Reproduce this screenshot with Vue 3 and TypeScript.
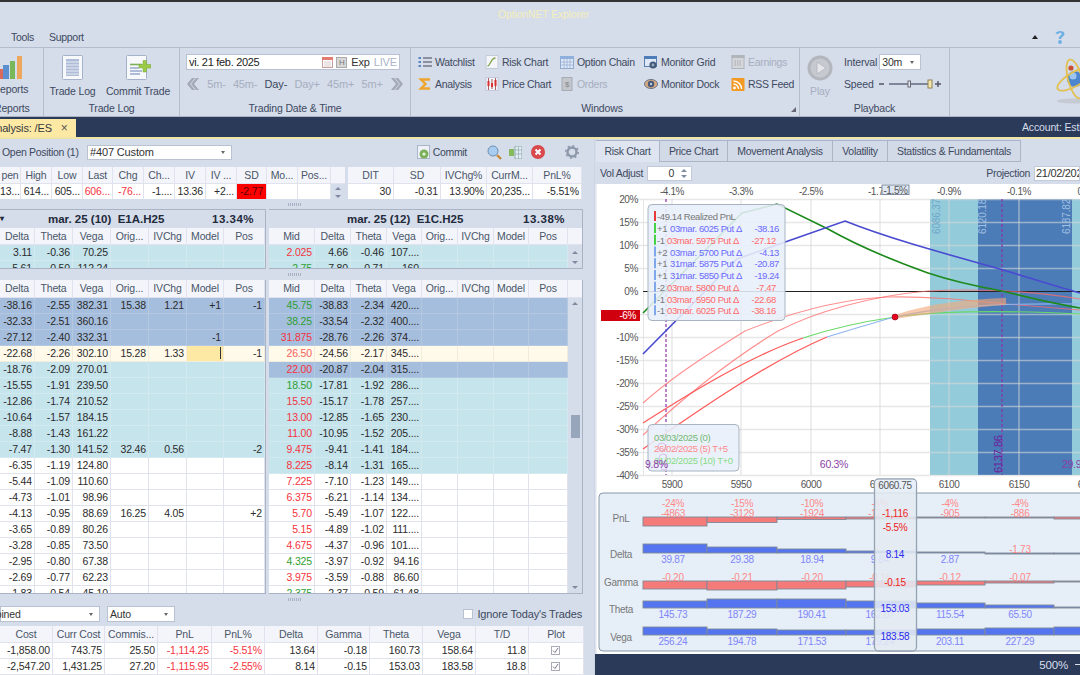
<script setup lang="ts">
type Row = string[];
const stripHead = ['pen','High','Low','Last','Chg','Ch...','IV','IV ...','SD','Mo...','Pos...'];
const stripRow = ['13...','614...','605...','606...','-76...','-1....','13.36','+2...','-2.77','',''];
const strip2Head = ['DIT','SD','IVChg%','CurrM...','PnL%'];
const strip2Row = ['30','-0.31','13.90%','20,235...','-5.51%'];
const headL = ['Delta','Theta','Vega','Orig...','IVChg','Model','Pos'];
const headR = ['Mid','Delta','Theta','Vega','Orig...','IVChg','Model','Pos'];

const midL: Row[] = [
  ['cyan','3.11','-0.36','70.25','','','',''],
  ['cyan','5.61','-0.50','112.24','','','',''],
];
const midR: Row[] = [
  ['cyan','r','2.025','4.66','-0.46','107....','','','',''],
  ['cyan','g','2.75','7.80','-0.71','160','','','',''],
];
const mainL: Row[] = [
  ['blue','-38.16','-2.55','382.31','15.38','1.21','+1','-1'],
  ['blue','-32.33','-2.51','360.16','','','',''],
  ['blue','-27.12','-2.40','332.31','','','-1',''],
  ['cream','-22.68','-2.26','302.10','15.28','1.33','#','-1'],
  ['cyan','-18.76','-2.09','270.01','','','',''],
  ['cyan','-15.55','-1.91','239.50','','','',''],
  ['cyan','-12.86','-1.74','210.52','','','',''],
  ['cyan','-10.64','-1.57','184.15','','','',''],
  ['cyan','-8.88','-1.43','161.22','','','',''],
  ['cyan','-7.47','-1.30','141.52','32.46','0.56','','-2'],
  ['white','-6.35','-1.19','124.80','','','',''],
  ['white','-5.44','-1.09','110.60','','','',''],
  ['white','-4.73','-1.01','98.96','','','',''],
  ['white','-4.13','-0.95','88.69','16.25','4.05','','+2'],
  ['white','-3.65','-0.89','80.26','','','',''],
  ['white','-3.28','-0.85','73.50','','','',''],
  ['white','-2.95','-0.80','67.38','','','',''],
  ['white','-2.69','-0.77','62.23','','','',''],
  ['white','-1.83','-0.54','45.10','','','',''],
];
const mainR: Row[] = [
  ['blue','g','45.75','-38.83','-2.34','420....'],
  ['blue','g','38.25','-33.54','-2.32','400....'],
  ['blue','r','31.875','-28.76','-2.26','374....'],
  ['cream','l','26.50','-24.56','-2.17','345....'],
  ['blue','r','22.00','-20.87','-2.04','315....'],
  ['cyan','g','18.50','-17.81','-1.92','286....'],
  ['cyan','r','15.50','-15.17','-1.78','257....'],
  ['cyan','r','13.00','-12.85','-1.65','230....'],
  ['cyan','r','11.00','-10.95','-1.52','205....'],
  ['cyan','r','9.475','-9.41','-1.41','184....'],
  ['cyan','r','8.225','-8.14','-1.31','165....'],
  ['white','r','7.225','-7.10','-1.23','149....'],
  ['white','r','6.375','-6.21','-1.14','134....'],
  ['white','r','5.70','-5.49','-1.07','122....'],
  ['white','r','5.15','-4.89','-1.02','111....'],
  ['white','r','4.675','-4.37','-0.96','101....'],
  ['white','g','4.325','-3.97','-0.92','94.16'],
  ['white','r','3.975','-3.59','-0.88','86.60'],
  ['white','g','2.375','-2.37','-0.59','61.48'],
];
const botHead = ['Cost','Curr Cost','Commis...','PnL','PnL%','Delta','Gamma','Theta','Vega','T/D','Plot'];
const botRows: Row[] = [
  ['-1,858.00','743.75','25.50','-1,114.25','-5.51%','13.64','-0.18','160.73','158.64','11.8',''],
  ['-2,547.20','1,431.25','27.20','-1,115.95','-2.55%','8.14','-0.15','153.03','183.58','18.8',''],
];
const navItems = [['5m-',0],['45m-',0],['Day-',1],['Day+',0],['45m+',0],['5m+',0]] as [string, number][];
const rightTabs = ['Price Chart','Movement Analysis','Volatility','Statistics & Fundamentals'];

const yLabels = [20,15,10,5,0,-5,-10,-15,-20,-25,-30,-35,-40];
const yPos = (p: number) => 290 - p * 4.6;
const xGrid = [672,741,811,880,949,1019,1088];
const xText = ['5900','5950','6000','6050','6100','6150','6200'];
const topPct = [[672,'-4.1%'],[741,'-3.3%'],[811,'-2.5%'],[880,'-1.7%'],[949,'-0.9%'],[1019,'-0.1%'],[1088,'0.7%']] as [number,string][];
const tipRows = [
  ['#45d045','+1','03mar. 6025 Put Δ','-38.16','b'],
  ['#45d045','-1','03mar. 5975 Put Δ','-27.12','r'],
  ['#7fa8ea','+2','03mar. 5700 Put Δ','-4.13','b'],
  ['#7fa8ea','+1','31mar. 5875 Put Δ','-20.87','b'],
  ['#7fa8ea','+1','31mar. 5850 Put Δ','-19.24','b'],
  ['#7fa8ea','-2','03mar. 5800 Put Δ','-7.47','r'],
  ['#7fa8ea','-1','03mar. 5950 Put Δ','-22.68','r'],
  ['#7fa8ea','-1','03mar. 6025 Put Δ','-38.16','r'],
];
const edges = [643,707,777,846,916,985,1054,1124];
function bars(base: number, tops: number[]) {
  return tops.map((t, i) => ({ x: edges[i], w: edges[i + 1] - edges[i], y: Math.min(base, t), h: Math.abs(t - base) }));
}
const rowsPanel = [
  { name:'PnL', ly:517, fill:'#f57a7a', bars: bars(516,[525,521.5,518.5,518,517,517,518]) },
  { name:'Delta', ly:553, fill:'#5575f0', bars: bars(552,[543,546,548,550,551,553,553]) },
  { name:'Gamma', ly:581, fill:'#f57a7a', bars: bars(580,[588,589,588,586,584,582,581]) },
  { name:'Theta', ly:608, fill:'#5575f0', bars: bars(607,[600,598,598,600,602,604,606]) },
  { name:'Vega', ly:636, fill:'#5575f0', bars: bars(634,[626,628,629,629,628,627,626]) },
];
const panelRed = [
  [673,505.5,'-24%'],[742,505.5,'-15%'],[812,505.5,'-10%'],[880,505.5,'-6%'],[950,505.5,'-4%'],[1020,505.5,'-4%'],
  [673,515.5,'-4863'],[742,515.5,'-3129'],[812,515.5,'-1924'],[880,515.5,'-1247'],[950,515.5,'-905'],[1020,515.5,'-886'],
  [1020,552,'-1.73'],
  [673,580,'-0.20'],[742,580,'-0.21'],[812,580,'-0.20'],[880,580,'-0.16'],[950,580,'-0.12'],[1020,580,'-0.07'],
] as [number,number,string][];
const panelBlue = [
  [673,562,'39.87'],[742,562,'29.38'],[812,562,'18.94'],[880,562,'9.84'],[950,562,'2.87'],
  [673,617,'145.73'],[742,617,'187.29'],[812,617,'190.41'],[880,617,'162.07'],[950,617,'115.54'],[1020,617,'65.50'],
  [673,644,'256.24'],[742,644,'194.78'],[812,644,'171.53'],[880,644,'179.24'],[950,644,'203.11'],[1020,644,'227.29'],
] as [number,number,string][];
</script>

<template>
  <div class="app">
    <div class="topline"></div>
    <div class="titlebar">OptionNET Explorer</div>
    <div class="menubar">
      <span class="menu">Tools</span>
      <span class="menu">Support</span>
      <span class="menu-spacer"></span>
      <svg class="collapse" width="6" height="4" viewBox="0 0 6 4"><path d="M0 4L3 0L6 4Z" fill="#222"/></svg>
      <svg class="help" width="12" height="16" viewBox="0 0 12 16">
        <path d="M1.5 4.5C2 1.5 10.5 .5 10.5 4.8C10.5 7.5 7.3 7.5 7.3 10H4.7C4.7 6.8 7.5 6.8 7.5 4.8C7.5 3.2 4.5 3.2 4.2 5.2Z" fill="#6fb0e3"/>
        <circle cx="6" cy="13" r="1.9" fill="#6fb0e3"/>
      </svg>
    </div>

    <div class="ribbon">
      <div class="group g-reports">
        <div class="g-body reports-body">
          <svg width="24" height="24" viewBox="0 0 24 24">
            <rect x="-2" y="14" width="5" height="10" fill="#dc6a5c"/>
            <rect x="3" y="10" width="6" height="14" fill="#5c8fd0"/>
            <rect x="10" y="6" width="5" height="18" fill="#79b85a"/>
            <rect x="17" y="1" width="5" height="23" fill="#eda75c"/>
          </svg>
          <span class="clip-label">eports</span>
        </div>
        <div class="g-label g-label-clip">Reports</div>
      </div>

      <div class="group g-log">
        <div class="g-body log-body">
          <div class="bigbtn b1">
            <svg width="21" height="25" viewBox="0 0 21 25">
              <rect x=".5" y=".5" width="20" height="24" rx="1" fill="#f6f8fc" stroke="#a3b2c9"/>
              <rect x="4" y="4" width="13" height="17" fill="#aebcd8"/>
              <path d="M4 7h13M4 10h13M4 13h13M4 16h13M4 19h13" stroke="#e8edf6"/>
            </svg>
            <span>Trade Log</span>
          </div>
          <div class="bigbtn b2">
            <svg width="25" height="25" viewBox="0 0 25 25">
              <rect x=".5" y=".5" width="20" height="24" rx="1" fill="#f6f8fc" stroke="#a3b2c9"/>
              <path d="M4 9.5h12" stroke="#7cb05a" stroke-width="1.6"/>
              <path d="M4 13h9M4 16h12M4 19h10" stroke="#aebcd8" stroke-width="2"/>
              <path d="M17 5.5h3.5V9.5H25V13H20.5V17H17V13H13V9.5H17Z" fill="#9acb46" stroke="#7ba437" stroke-width=".5"/>
            </svg>
            <span>Commit Trade</span>
          </div>
        </div>
        <div class="g-label">Trade Log</div>
      </div>

      <div class="group g-date">
        <div class="g-body date-body">
          <div class="dateinput">
            <span class="date-text">vi. 21 feb. 2025</span>
            <svg width="11" height="11" viewBox="0 0 11 11">
              <rect x=".5" y=".5" width="10" height="10" fill="#fff" stroke="#c8a0a0"/>
              <rect x="0" y="0" width="11" height="3" fill="#e27b70"/>
              <path d="M2 5h7M2 7h7M2 9h7" stroke="#dcc" />
            </svg>
            <span class="hbox">H</span>
            <span class="exp">Exp</span>
            <span class="live">LIVE</span>
          </div>
          <div class="navrow">
            <svg width="14" height="12" viewBox="0 0 14 12"><path d="M6 0L1 6L6 12H9L4 6L9 0ZM10 0L5 6L10 12H13L8 6L13 0Z" fill="#a3a9b5"/></svg>
            <span v-for="n in navItems" :key="n[0]" :class="n[1] ? 'nav-on' : 'nav-off'">{{ n[0] }}</span>
            <svg width="14" height="12" viewBox="0 0 14 12"><path d="M1 0L6 6L1 12H4L9 6L4 0ZM5 0L10 6L5 12H8L13 6L8 0Z" fill="#a3a9b5"/></svg>
          </div>
        </div>
        <div class="g-label">Trading Date &amp; Time</div>
      </div>

      <div class="group g-win">
        <div class="g-body wingrid">
          <span class="wi">
            <svg width="14" height="12" viewBox="0 0 14 12"><path d="M5 2h9M5 6h9M5 10h9" stroke="#445" stroke-width="1.2"/><path d="M.5 1h2.5v2h-2.5zM.5 5h2.5v2h-2.5zM.5 9h2.5v2h-2.5z" fill="#5a86c0"/></svg>
            Watchlist
          </span>
          <span class="wi">
            <svg width="13" height="14" viewBox="0 0 13 14"><rect x=".5" y=".5" width="12" height="13" fill="#f3f5fa" stroke="#c3cad8"/><path d="M2 11C5 11 5 3 10 3" fill="none" stroke="#7fa64a" stroke-width="1.3"/></svg>
            Risk Chart
          </span>
          <span class="wi">
            <svg width="14" height="13" viewBox="0 0 14 13"><rect x=".5" y=".5" width="13" height="12" fill="#dfe8f6" stroke="#8fa9cf"/><rect x="0" y="0" width="14" height="3" fill="#8fb0dc"/><path d="M1 6h12M1 9h12M4 3v9M7 3v9M10 3v9" stroke="#8fa9cf" stroke-width=".7"/></svg>
            Option Chain
          </span>
          <span class="wi">
            <svg width="14" height="13" viewBox="0 0 14 13"><rect x=".5" y=".5" width="12" height="10" fill="#dfe8f6" stroke="#5c7fae"/><rect x="0" y="0" width="13" height="3" fill="#4f7db8"/><circle cx="9" cy="9" r="3.6" fill="#445a7a"/><circle cx="9" cy="9" r="1.4" fill="#9ab"/></svg>
            Monitor Grid
          </span>
          <span class="wi off">
            <svg width="13" height="14" viewBox="0 0 13 14"><rect x=".5" y=".5" width="12" height="13" fill="#d4d6da" stroke="#b0b4bb"/><rect x="0" y="0" width="13" height="3" fill="#b0b4bb"/><path d="M3 6h7M3 8h7M3 10h7" stroke="#a5a9b0" stroke-dasharray="1.5 1"/></svg>
            Earnings
          </span>
          <span class="wi">
            <svg width="13" height="14" viewBox="0 0 13 14"><path d="M11.5 2.5H2.5L7 7L2.5 11.5H11.5" fill="none" stroke="#eea52e" stroke-width="2.4"/></svg>
            Analysis
          </span>
          <span class="wi">
            <svg width="13" height="14" viewBox="0 0 13 14"><rect x=".5" y=".5" width="12" height="13" fill="#f3f5fa" stroke="#c3cad8"/><path d="M3 1v12M6.5 2v10M10 1v12" stroke="#8a2020" stroke-width=".7"/><rect x="2" y="4" width="2" height="5" fill="#d93030"/><rect x="5.5" y="6" width="2" height="4" fill="#d93030"/><rect x="9" y="3" width="2" height="6" fill="#d93030"/></svg>
            Price Chart
          </span>
          <span class="wi off">
            <svg width="13" height="14" viewBox="0 0 13 14"><rect x="1.5" y=".5" width="10" height="13" fill="#c3c6cc" stroke="#a8acb4"/><text x="6.5" y="10" class="dollar">$</text></svg>
            Orders
          </span>
          <span class="wi">
            <svg width="14" height="12" viewBox="0 0 14 12"><ellipse cx="7" cy="6" rx="6.5" ry="4.5" fill="#d8a97e" stroke="#66758c"/><circle cx="7" cy="6" r="3.2" fill="#47597a"/><circle cx="7" cy="6" r="1.2" fill="#bcd"/></svg>
            Monitor Dock
          </span>
          <span class="wi">
            <svg width="13" height="13" viewBox="0 0 13 13"><rect width="13" height="13" rx="1" fill="#f39a24"/><circle cx="3" cy="10" r="1.4" fill="#fff"/><path d="M2 6a5 5 0 015 5M2 3a8 8 0 018 8" fill="none" stroke="#fff" stroke-width="1.4"/></svg>
            RSS Feed
          </span>
        </div>
        <div class="g-label g-label-win">Windows
          <svg class="launcher" width="5" height="5" viewBox="0 0 5 5"><path d="M5 0V5H0Z" fill="#667"/></svg>
        </div>
      </div>

      <div class="group g-play">
        <div class="g-body play-body">
          <div class="playcol">
            <svg width="26" height="26" viewBox="0 0 26 26">
              <circle cx="13" cy="13" r="12.5" fill="#b3b6bd"/>
              <circle cx="13" cy="13" r="9.5" fill="#c6c9cf"/>
              <path d="M10 7L19 13L10 19Z" fill="#e4e6ea" stroke="#a5a8af" stroke-width=".6"/>
            </svg>
            <span class="off">Play</span>
          </div>
          <div class="playctl">
            <div class="pc-row">
              <span>Interval</span>
              <span class="sel sel-int"><span>30m</span><i class="caret"></i></span>
            </div>
            <div class="pc-row speed">
              <span>Speed</span>
              <svg width="66" height="12" viewBox="0 0 66 12">
                <path d="M3 6h5M62 3v6M59 6h6" stroke="#556" stroke-width="1.4"/>
                <path d="M13 6h41" stroke="#7d8797" stroke-width="2"/>
                <rect x="32" y="3" width="2.5" height="6" fill="#e8eaef" stroke="#667"/>
                <rect x="52" y="2" width="4" height="8" fill="#f5e7ad" stroke="#8f8350"/>
              </svg>
            </div>
          </div>
        </div>
        <div class="g-label">Playback</div>
      </div>

      <div class="logo">
        <svg width="40" height="60" viewBox="0 0 40 60">
          <ellipse cx="23" cy="50" rx="16" ry="2.5" fill="#c6cad3"/>
          <circle cx="25" cy="28" r="8" fill="#4b86cf"/>
          <circle cx="23" cy="25" r="3.5" fill="#9cc6ef"/>
          <ellipse cx="25" cy="28" rx="7" ry="20" transform="rotate(-15 25 28)" fill="none" stroke="#e3c04f" stroke-width="1.8"/>
          <ellipse cx="25" cy="28" rx="7" ry="20" transform="rotate(60 25 28)" fill="none" stroke="#e3c04f" stroke-width="1.8"/>
          <circle cx="21" cy="17" r="2.6" fill="#c8502e"/>
        </svg>
      </div>
    </div>

    <div class="tabbar">
      <div class="doctab"><span class="doctab-text">Analysis: /ES</span><span class="doctab-x">×</span></div>
      <span class="account">Account: Estimate</span>
    </div>
    <div class="accent"></div>

    <div class="main">
      <div class="left">
        <div class="posbar">
          <span class="pos-title">Open Position (1)</span>
          <span class="sel sel-pos"><span>#407 Custom</span><i class="caret"></i></span>
          <span class="pos-spacer"></span>
          <svg width="14" height="14" viewBox="0 0 14 14"><rect x=".5" y=".5" width="12" height="13" fill="#eef1f7" stroke="#a9b5c9"/><circle cx="7" cy="9" r="4.5" fill="#7cb05a"/><circle cx="7" cy="9" r="1.6" fill="#e9f3dd"/></svg>
          <span class="commit">Commit</span>
          <svg class="ic1" width="15" height="15" viewBox="0 0 15 15"><circle cx="6" cy="6" r="5" fill="#a9cdf0" stroke="#6d8fb3"/><path d="M10 10l4 4" stroke="#c8893c" stroke-width="2.4"/></svg>
          <svg class="ic2" width="13" height="13" viewBox="0 0 13 13"><rect x="0" y="3" width="5" height="7" fill="#85bb5c"/><rect x="6" y="0" width="7" height="13" fill="#e6ecf4" stroke="#8aa"/><path d="M9.5 0v13M6 4h7M6 8h7" stroke="#8aa" stroke-width=".7"/></svg>
          <svg class="ic3" width="14" height="14" viewBox="0 0 14 14"><circle cx="7" cy="7" r="7" fill="#d9484a"/><path d="M4.5 4.5l5 5M9.5 4.5l-5 5" stroke="#fff" stroke-width="2"/></svg>
          <svg class="ic4" width="14" height="14" viewBox="0 0 14 14"><circle cx="7" cy="7" r="4.5" fill="none" stroke="#8d98aa" stroke-width="2.4"/><circle cx="7" cy="7" r="6.2" fill="none" stroke="#8d98aa" stroke-width="1.6" stroke-dasharray="2 2.8"/></svg>
        </div>

        <div class="strips">
          <div class="tbl strip-a">
            <div class="row head cols-strip">
              <span v-for="h in stripHead" :key="h" class="c ch">{{ h }}</span>
              <span class="c ch blank"></span>
            </div>
            <div class="row white cols-strip">
              <span v-for="(v, i) in stripRow" :key="i" class="c" :class="{ red: i === 3 || i === 4, sdbad: i === 8 }">{{ v }}</span>
              <span class="mini-sb"><i class="arrow up"></i><i class="arrow down"></i></span>
            </div>
          </div>
          <div class="tbl strip-b">
            <div class="row head cols-strip2">
              <span v-for="h in strip2Head" :key="h" class="c ch">{{ h }}</span>
            </div>
            <div class="row white cols-strip2">
              <span v-for="(v, i) in strip2Row" :key="i" class="c">{{ v }}</span>
            </div>
          </div>
        </div>

        <div class="splitter"><i class="grip"></i></div>

        <div class="pair pair-mid">
          <div class="tbl tbl-l">
            <div class="exphead">
              <span class="ex-tri">▾</span>
              <span class="ex-name ex-name-l">mar. 25 (10)&nbsp; E1A.H25</span>
              <span class="ex-pct">13.34%</span>
            </div>
            <div class="row head cols-l"><span v-for="h in headL" :key="h" class="c ch">{{ h }}</span></div>
            <div class="clip clip-mid">
              <div v-for="(r, i) in midL" :key="i" class="row cols-l" :class="r[0]">
                <span v-for="(v, j) in r.slice(1)" :key="j" class="c">{{ v }}</span>
              </div>
            </div>
          </div>
          <div class="tbl tbl-r">
            <div class="exphead">
              <span class="ex-name ex-name-r">mar. 25 (12)&nbsp; E1C.H25</span>
              <span class="ex-pct">13.38%</span>
            </div>
            <div class="row head cols-r">
              <span v-for="h in headR" :key="h" class="c ch">{{ h }}</span><span class="c ch blank"></span>
            </div>
            <div class="withsb">
              <div class="clip clip-mid rows-col">
                <div v-for="(r, i) in midR" :key="i" class="row cols-rb" :class="r[0]">
                  <span class="c" :class="r[1] === 'r' ? 'red' : 'green'">{{ r[2] }}</span>
                  <span v-for="(v, j) in r.slice(3)" :key="j" class="c">{{ v }}</span>
                </div>
              </div>
              <div class="sb sb-mid"><i class="arrow up"></i><i class="arrow down"></i></div>
            </div>
          </div>
        </div>

        <div class="splitter split2"><i class="grip"></i></div>

        <div class="pair pair-main">
          <div class="tbl tbl-l">
            <div class="row head cols-l"><span v-for="h in headL" :key="h" class="c ch">{{ h }}</span></div>
            <div class="clip clip-main">
              <div v-for="(r, i) in mainL" :key="i" class="row cols-l" :class="r[0]">
                <template v-for="(v, j) in r.slice(1)" :key="j">
                  <span v-if="v === '#'" class="c editcell"><i class="cursor"></i></span>
                  <span v-else class="c">{{ v }}</span>
                </template>
              </div>
            </div>
          </div>
          <div class="tbl tbl-r">
            <div class="row head cols-r">
              <span v-for="h in headR" :key="h" class="c ch">{{ h }}</span><span class="c ch blank"></span>
            </div>
            <div class="withsb">
              <div class="clip clip-main rows-col">
                <div v-for="(r, i) in mainR" :key="i" class="row cols-rb" :class="r[0]">
                  <span class="c" :class="r[1] === 'r' ? 'red' : r[1] === 'g' ? 'green' : 'lred'">{{ r[2] }}</span>
                  <span class="c">{{ r[3] }}</span>
                  <span class="c">{{ r[4] }}</span>
                  <span class="c">{{ r[5] }}</span>
                  <span class="c"></span><span class="c"></span><span class="c"></span><span class="c"></span>
                </div>
              </div>
              <div class="sb sb-main"><i class="arrow up"></i><i class="thumb"></i><i class="arrow down"></i></div>
            </div>
          </div>
        </div>

        <div class="splitter split3"><i class="grip"></i></div>

        <div class="controls">
          <span class="sel sel-a"><span class="sel-a-text">Combined</span><i class="caret"></i></span>
          <span class="sel sel-b"><span>Auto</span><i class="caret"></i></span>
          <span class="pos-spacer"></span>
          <i class="chk"></i>
          <span class="ignore">Ignore Today's Trades</span>
        </div>

        <div class="tbl bottom">
          <div class="row head cols-bot"><span v-for="h in botHead" :key="h" class="c ch">{{ h }}</span></div>
          <div v-for="(r, i) in botRows" :key="i" class="row white cols-bot">
            <template v-for="(v, j) in r" :key="j">
              <span v-if="j === 10" class="c plotcell">
                <svg width="9" height="9" viewBox="0 0 9 9"><rect x=".5" y=".5" width="8" height="8" fill="#fff" stroke="#aab"/><path d="M2 4.5L4 6.5L7 2" fill="none" stroke="#778" stroke-width="1"/></svg>
              </span>
              <span v-else class="c" :class="{ red: j === 3 || j === 4 }">{{ v }}</span>
            </template>
          </div>
        </div>
      </div>

      <div class="right">
        <div class="rtabs">
          <span class="rtab active">Risk Chart</span>
          <span v-for="t in rightTabs" :key="t" class="rtab">{{ t }}</span>
        </div>
        <div class="rtool">
          <span class="lbl">Vol Adjust</span>
          <span class="spin"><span class="spin-v">0</span><span class="spin-a"><i class="arrow up"></i><i class="arrow down"></i></span></span>
          <span class="pos-spacer"></span>
          <span class="lbl">Projection</span>
          <span class="projinput">21/02/2025</span>
        </div>
        <svg class="chart" width="485" height="470" viewBox="595 183 485 470">
          <rect x="595" y="183" width="485" height="470" fill="#fff"/>
          <rect x="595" y="183" width="1.5" height="470" fill="#dfe4ef"/>
          <rect x="930" y="198" width="48" height="276" fill="#93cbdb"/>
          <rect x="978" y="198" width="94" height="276" fill="#4c7cb8"/>
          <rect x="1072" y="198" width="10" height="276" fill="#93cbdb"/>
          <path v-for="x in xGrid" :key="x" :d="`M${x} 198V474`" stroke="rgba(215,215,215,.65)" stroke-width="1.3"/>
          <path d="M643.5 198V474" stroke="rgba(215,215,215,.6)"/>
          <path v-for="p in yLabels" :key="p" :d="`M${p === 0 ? 643 : 637} ${yPos(p) + 0.5}H1080`" :stroke="p === 0 ? '#222' : 'rgba(215,215,215,.6)'" :stroke-width="p === 0 ? 1 : 1.3"/>
          <path d="M666 198V474M1002 198V474" stroke="#8d33a8" stroke-width="1.2" stroke-dasharray="3 2"/>
          <text x="937" y="233" class="t-band" transform="rotate(-90 937 233)" fill="#6ea7c8" dy="3">6086.37</text>
          <text x="983" y="233" class="t-band" transform="rotate(-90 983 233)" fill="#9fc0e2" dy="3">6120.18</text>
          <text x="1067" y="233" class="t-band" transform="rotate(-90 1067 233)" fill="#9fc0e2" dy="3">6187.82</text>
          <text x="998" y="472" class="t-purple t-dark" transform="rotate(-90 998 472)" dy="4">6137.86</text>
          <text x="834" y="467" class="t-purple" text-anchor="middle">60.3%</text>
          <text x="1062" y="467" class="t-purple">29.9%</text>

          <!-- curves -->
          <path d="M643 402C670 378 700 358 745 330C790 312 840 298 888 296C925 295 965 299 1006 303L1080 309" fill="none" stroke="#ff6a6a" stroke-opacity=".75" stroke-width="1.1"/>
          <path d="M643 434C680 400 725 362 778 330C815 311 870 295 928 290C960 288 1020 288 1080 298" fill="none" stroke="#ff6a6a" stroke-opacity=".75" stroke-width="1.1"/>
          <path d="M643 422C690 392 750 355 803 337" fill="none" stroke="#ff5a5a" stroke-width="1.3"/>
          <path d="M803 337C830 328 860 321 895 316" fill="none" stroke="#6ad86a" stroke-width="1.2"/>
          <path d="M895 316C940 310 1000 309 1080 313" fill="none" stroke="#6ad86a" stroke-width="1.1"/>
          <path d="M643 448C700 408 770 360 827 336" fill="none" stroke="#ff5a5a" stroke-width="1.3"/>
          <path d="M827 336C850 329 872 322 895 316C940 306 990 302 1080 303" fill="none" stroke="#8fb4f0" stroke-width="1.1"/>
          <path d="M895 314C930 302 970 298 1006 297L1006 304C960 307 930 313 895 318Z" fill="#f2a97a" fill-opacity=".62"/>
          <path d="M643 312L742 212L777 203L828 228C860 246 900 262 928 272C955 281 980 286 1002 290C1030 297 1055 303 1080 307" fill="none" stroke="#1d8a1d" stroke-width="1.6"/>
          <path d="M643 353L737 258L845 220C890 238 950 254 1000 268C1030 277 1055 285 1080 292" fill="none" stroke="#4a4ad0" stroke-width="1.6"/>
          <circle cx="895" cy="316" r="3" fill="#e8001c" stroke="#7a0010" stroke-width=".6"/>

          <!-- y labels -->
          <text v-for="p in yLabels" :key="'y'+p" x="638" :y="yPos(p) + 3.5" class="t-axis" text-anchor="end">{{ p }}%</text>
          <rect x="601" y="309" width="39" height="11" fill="#d0000e"/>
          <text x="636" y="318" class="t-axis t-white" text-anchor="end">-6%</text>
          <text v-for="t in topPct" :key="t[1]" :x="t[0]" y="194" class="t-axis" text-anchor="middle">{{ t[1] }}</text>
          <rect x="882" y="184" width="27" height="9.5" fill="#dfe7f2" stroke="#7d8ca0"/>
          <text x="895.5" y="192.5" class="t-axis" text-anchor="middle">-1.5%</text>
          <text v-for="(x, i) in xGrid" :key="'x'+x" :x="x" y="487" class="t-axis" text-anchor="middle">{{ xText[i] }}</text>

          <!-- tooltip -->
          <rect x="648" y="203.5" width="137" height="116" rx="4" fill="#e8eff9" fill-opacity=".88" stroke="#a8b4c2"/>
          <rect x="654" y="210" width="2" height="10" fill="#e83a3a"/>
          <text x="657" y="219" class="t-tip" fill="#777">-49.14 Realized PnL</text>
          <g v-for="(t, i) in tipRows" :key="i">
            <rect x="654" :y="222 + i * 11.75" width="2" height="10" :fill="t[0]"/>
            <text x="657" :y="231 + i * 11.75" class="t-tip" fill="#777">{{ t[1] }}</text>
            <text :x="t[4] === 'b' ? 670 : 667" :y="231 + i * 11.75" class="t-tip" :fill="t[4] === 'b' ? '#6a6aff' : '#ff6a6a'">{{ t[2] }}</text>
            <text :x="t[4] === 'b' ? 779 : 776" :y="231 + i * 11.75" class="t-tip" text-anchor="end" :fill="t[4] === 'b' ? '#6a6aff' : '#ff6a6a'">{{ t[3] }}</text>
          </g>
          <rect x="648" y="423.5" width="91" height="46.5" rx="4" fill="#e8eff9" fill-opacity=".88" stroke="#a8b4c2"/>
          <circle cx="662" cy="446" r="4" fill="none" stroke="#c9a3e0" stroke-opacity=".6"/>
          <circle cx="663" cy="457" r="4" fill="none" stroke="#c9a3e0" stroke-opacity=".6"/>
          <circle cx="664" cy="466" r="3" fill="none" stroke="#c9a3e0" stroke-opacity=".6"/>
          <text x="654" y="439.5" class="t-tip" fill="#72b872">03/03/2025 (0)</text>
          <text x="654" y="451" class="t-tip" fill="#ff8a8a">26/02/2025 (5) T+5</text>
          <text x="654" y="462.5" class="t-tip" fill="#86dc86">21/02/2025 (10) T+0</text>
          <text x="645" y="467" class="t-purple">9.8%</text>

          <!-- bottom panel -->
          <rect x="599" y="492" width="500" height="158" rx="4" fill="#e6eff7" stroke="#8898a8"/>
          <g v-for="r in rowsPanel" :key="r.name">
            <text x="621" :y="r.ly + 3.5" class="t-panel" text-anchor="middle">{{ r.name }}</text>
            <rect v-for="(b, i) in r.bars" :key="i" :x="b.x" :y="b.y" :width="b.w" :height="b.h" :fill="r.fill" stroke="#7f8a98" stroke-width=".9"/>
          </g>
          <text v-for="(t, i) in panelRed" :key="'r'+i" :x="t[0]" :y="t[1]" class="t-panel t-pred" text-anchor="middle">{{ t[2] }}</text>
          <text v-for="(t, i) in panelBlue" :key="'b'+i" :x="t[0]" :y="t[1]" class="t-panel t-pblue" text-anchor="middle">{{ t[2] }}</text>
          <rect x="874.5" y="478" width="42" height="172" rx="4" fill="#e4eaf3" fill-opacity=".88" stroke="#94a2b3" stroke-width="1.3"/>
          <rect x="875.2" y="478.7" width="40.6" height="11" rx="3" fill="#e8eff9"/>
          <text x="895" y="487.5" class="t-axis" text-anchor="middle">6060.75</text>
          <text x="895" y="516" class="t-ov" text-anchor="middle" fill="#ee2222">-1,116</text>
          <text x="895" y="529.5" class="t-ov" text-anchor="middle" fill="#ee2222">-5.5%</text>
          <text x="895" y="556.5" class="t-ov" text-anchor="middle" fill="#2a2aee">8.14</text>
          <text x="895" y="584.5" class="t-ov" text-anchor="middle" fill="#ee2222">-0.15</text>
          <text x="895" y="611" class="t-ov" text-anchor="middle" fill="#2a2aee">153.03</text>
          <text x="895" y="638.5" class="t-ov" text-anchor="middle" fill="#2a2aee">183.58</text>
        </svg>
        <div class="status"><span class="zoomtxt">500%</span><span class="zoomdash"></span></div>
      </div>
    </div>
  </div>
</template>

<style scoped>
.app {
  width: 1080px; height: 675px; overflow: hidden; background: #d5dcea; color: #333;
  font-family: "Liberation Sans", "Noto Sans", sans-serif; font-size: 10.5px; line-height: 14px; letter-spacing: -.15px;
  display: flex; flex-direction: column;
}
.topline { height: 2px; background: #333; flex: none; }
.titlebar { height: 25px; flex: none; text-align: center; color: #f3efbc; font-size: 10.5px; line-height: 24px; padding-left: 7px; }
.menubar { height: 20px; flex: none; display: flex; align-items: center; padding-left: 11px; border-bottom: 1px solid #b4bdce; color: #3d4a60; letter-spacing: -.3px; }
.menu { margin-right: 15px; }
.menu-spacer { flex: 1; }
.collapse { margin-right: 16px; }
.help { margin-right: 14px; }

.ribbon { height: 68px; flex: none; display: flex; border-bottom: 1px solid #aab3c4; }
.group { display: flex; flex-direction: column; border-right: 1px solid #b4bdce; flex: none; overflow: hidden; position: relative; box-sizing: border-box; }
.g-body { height: 53px; flex: none; }
.g-label { height: 14px; text-align: center; color: #3d4a60; }
.g-label-win { padding-right: 6px; }
.launcher { position: absolute; right: 3px; bottom: 4px; }
.g-reports { width: 44px; }
.reports-body { display: flex; flex-direction: column; padding-top: 7px; box-sizing: border-box; width: 30px; }
.clip-label { margin-top: 3px; white-space: nowrap; color: #3d4a60; }
.g-label-clip { margin-left: -6px; width: 48px; text-align: left; white-space: nowrap; }
.g-log { width: 136px; }
.log-body { display: flex; padding: 7px 0 0 6px; gap: 11px; box-sizing: border-box; }
.bigbtn { display: flex; flex-direction: column; align-items: center; color: #3d4a60; white-space: nowrap; gap: 4px; }
.b1 { width: 45px; } .b2 { width: 64px; }
.g-date { width: 231px; }
.date-body { padding: 6px 0 0 6px; box-sizing: border-box; }
.dateinput { width: 214px; height: 16px; box-sizing: border-box; background: #fff; border: 1px solid #b9c2d2; display: flex; align-items: center; padding: 0 2px; }
.date-text { flex: 1; color: #222; font-size: 11px; letter-spacing: -.3px; }
.hbox { width: 11px; height: 11px; box-sizing: border-box; background: #d8d8d8; border: 1px solid #aaa; color: #777; font-size: 8px; line-height: 9px; text-align: center; margin: 0 4px 0 3px; }
.exp { color: #333; margin-right: 4px; font-size: 11px; }
.live { color: #a9b5ca; font-size: 11px; }
.navrow { display: flex; align-items: center; justify-content: space-between; margin-top: 7px; width: 218px; }
.nav-on { color: #3d4a60; font-size: 11px; }
.nav-off { color: #a6afbf; font-size: 11px; }
.g-win { width: 389px; }
.wingrid { display: grid; grid-template-columns: 67px 75px 84px 87px 1fr; grid-auto-rows: 22px; padding: 3px 0 0 7px; box-sizing: border-box; }
.wi { display: flex; align-items: center; gap: 3px; white-space: nowrap; color: #3d4a60; letter-spacing: -.3px; }
.wi svg { flex: 0 0 14px; }
.wi.off, .off { color: #a6afbf; }
.dollar { font-size: 8px; text-anchor: middle; fill: #888; }
.g-play { width: 150px; }
.play-body { display: flex; padding: 7px 0 0 7px; box-sizing: border-box; }
.playcol { width: 26px; display: flex; flex-direction: column; align-items: center; gap: 3px; }
.playctl { margin-left: 11px; display: flex; flex-direction: column; margin-top: -1px; }
.pc-row { display: flex; align-items: center; height: 16px; color: #3d4a60; gap: 2px; }
.speed { margin-top: 6px; }
.sel { display: inline-flex; align-items: center; justify-content: space-between; background: #fff; border: 1px solid #b9c2d2; box-sizing: border-box; color: #333; padding: 0 6px 0 2px; height: 16px; }
.sel-int { width: 42px; }
.caret { width: 0; height: 0; border: 2.5px solid transparent; border-top: 3px solid #666; border-bottom: 0; }
.logo { flex: 1; display: flex; justify-content: flex-end; margin-right: -10px; margin-top: 3px; }
.logo svg { flex: none; }

.tabbar { height: 20px; flex: none; background: #2a3a58; display: flex; align-items: flex-end; justify-content: space-between; color: #d5dcea; overflow: hidden; }
.doctab { width: 76px; height: 18px; background: #fde9a4; display: flex; align-items: center; color: #33383f; overflow: hidden; flex: none; }
.doctab-text { margin-left: -11px; white-space: nowrap; font-size: 11px; }
.doctab-x { margin-left: 9px; color: #555; font-size: 12px; }
.account { white-space: nowrap; width: 58px; height: 20px; line-height: 20px; flex: none; overflow: hidden; }
.accent { height: 2px; background: #efe6a6; flex: none; }

.main { flex: 1; display: flex; min-height: 0; }
.left { width: 595px; flex: none; display: flex; flex-direction: column; overflow: hidden; border-right: 1px solid #cdd4e2; box-sizing: border-box; }
.posbar { height: 28px; flex: none; display: flex; align-items: center; padding: 0 15px 2px 2px; box-sizing: border-box; color: #333; }
.pos-title { width: 85px; white-space: nowrap; color: #3d4a60; letter-spacing: -.3px; }
.sel-pos { width: 145px; height: 15px; font-size: 11px; }
.pos-spacer { flex: 1; }
.commit { margin: 0 20px 0 2px; color: #3d4a60; letter-spacing: -.3px; }
.ic1 { margin-right: 7px; } .ic2 { margin-right: 9px; } .ic3 { margin-right: 20px; }

.strips { display: flex; height: 32px; flex: none; gap: 3px; }
.tbl { background: #fff; box-sizing: border-box; overflow: hidden; flex: none; }
.strip-a { width: 345px; } .strip-b { width: 234px; }
.row { display: grid; height: 16px; box-sizing: border-box; }
.head { height: 17px; background: #f3f5fb; }
.pair-main .head { height: 18px; }
.c { display: block; text-align: right; padding-right: 2px; box-sizing: border-box; white-space: nowrap; overflow: hidden; border-right: 1px solid #e0e3ee; border-bottom: 1px solid #e0e3ee; line-height: 15px; color: #2b2b2b; }
.ch { text-align: center; padding: 0; color: #4a5568; line-height: 16px; }
.blank { border-right: 0; }
.cols-strip { grid-template-columns: 21px 31px 31px 30px 31px 31px 31px 31px 30px 31px 33px 14px; }
.cols-strip2 { grid-template-columns: 46px 47px 46px 46px 49px; }
.sdbad { background: #ff0000; color: #5a0000; text-align: center; padding: 0; }
.c.red { color: #f6323e; }
.c.lred { color: #f9605e; }
.c.green { color: #2f9e33; }
.mini-sb { background: #d5dcea; display: flex; flex-direction: column; align-items: center; justify-content: space-around; }
.arrow { display: block; width: 0; height: 0; border: 3px solid transparent; }
.arrow.up { border-top: 0; border-bottom: 3px solid #7e8aa0; }
.arrow.down { border-bottom: 0; border-top: 3px solid #7e8aa0; }

.splitter { height: 10px; flex: none; display: flex; justify-content: center; align-items: center; padding-right: 4px; }
.split2 { height: 11px; }
.split3 { height: 10px; }
.grip { width: 14px; height: 3px; background: repeating-linear-gradient(90deg, #a8b2c4 0 1px, transparent 1px 2px); }

.pair { display: flex; gap: 3px; flex: none; }
.tbl-l { width: 266px; border-right: 1px solid #aab3c4; }
.tbl-r { width: 314px; border: 1px solid #aab3c4; border-width: 0 1px 0 0; }
.pair-mid .tbl { height: 60px; border-bottom: 1px solid #aab3c4; }
.pair-main { height: 314px; }
.pair-main .tbl { border-bottom: 1px solid #aab3c4; }
.exphead { height: 19px; display: flex; align-items: center; font-weight: 700; color: #1f2a3a; background: #d5dcea; border-top: 1px solid #aab3c4; box-sizing: border-box; font-size: 11.5px; letter-spacing: 0; }
.ex-tri { width: 48px; font-size: 8px; }
.ex-name { white-space: nowrap; }
.ex-name-l { width: 164px; }
.ex-name-r { margin-left: 78px; width: 176px; }
.ex-pct { white-space: nowrap; letter-spacing: .5px; }
.cols-l { grid-template-columns: 35px 38px 38px 38px 38px 37px 41px; }
.cols-r { grid-template-columns: 46px 36px 36px 35px 36px 36px 35px 39px 14px; }
.cols-rb { grid-template-columns: 46px 36px 36px 35px 36px 36px 35px 39px; }
.clip { overflow: hidden; }
.clip-mid { height: 24px; }
.clip-main { height: 295px; }
.withsb { display: flex; }
.rows-col { width: 299px; flex: none; }
.sb { flex: 1; background: #d5dcea; display: flex; flex-direction: column; align-items: center; }
.sb-mid { justify-content: space-around; height: 24px; padding: 2px 0; box-sizing: border-box; }
.sb-main { height: 295px; padding: 4px 0; box-sizing: border-box; }
.sb-main .arrow.up { margin-bottom: 110px; }
.sb-main .arrow.down { margin-top: auto; }
.thumb { display: block; width: 9px; height: 23px; background: #98a6bc; }
.blue { background: #a6bedd; } .cyan { background: #c5e4ec; } .cream { background: #fffaea; } .white { background: #fff; }
.blue .c { border-color: #b4c8e2; } .cyan .c { border-color: #d2e9f0; } .cream .c { border-color: #f2ecdc; }
.editcell { background: #fde9a4; position: relative; }
.cursor { position: absolute; right: 2px; top: 1px; width: 1px; height: 12px; background: #333; }
.controls { height: 22px; flex: none; display: flex; align-items: center; padding: 2px 12px 4px 0; box-sizing: border-box; gap: 7px; color: #3d4a60; }
.sel-a { width: 100px; }
.sel-a-text { margin-left: -29px; }
.sel-b { width: 68px; }
.chk { width: 8px; height: 8px; background: #fff; border: 1px solid #b9c2d2; margin-right: -3px; }
.ignore { white-space: nowrap; font-size: 11px; }
.bottom { width: 584px; height: 49px; }
.cols-bot { grid-template-columns: 53px 52px 53px 54px 53px 53px 52px 53px 53px 53px 55px; }
.plotcell { display: flex; align-items: center; justify-content: center; }

.right { flex: 1; display: flex; flex-direction: column; min-width: 0; overflow: hidden; }
.rtabs { height: 23px; flex: none; display: grid; grid-template-columns: 64px 68px 105px 55px 133px; align-items: end; justify-content: start; padding-left: 1px; letter-spacing: -.3px; }
.rtab { height: 22px; box-sizing: border-box; line-height: 20px; text-align: center; background: #d2d9e7; border: 1px solid #abb5c6; border-left: 0; color: #3d4a60; white-space: nowrap; }
.rtab.active { background: #dfe5f0; border-bottom: 0; }
.rtool { height: 22px; flex: none; display: flex; align-items: center; padding: 0 0 0 5px; color: #3d4a60; letter-spacing: -.3px; }
.lbl { margin-right: 4px; white-space: nowrap; }
.spin { width: 45px; height: 15px; background: #fff; border: 1px solid #c2cad9; box-sizing: border-box; display: flex; align-items: center; justify-content: flex-end; color: #333; }
.spin-v { margin-right: 7px; }
.spin-a { display: flex; flex-direction: column; gap: 3px; margin-right: 4px; }
.projinput { width: 46px; height: 15px; background: #fff; border: 1px solid #c2cad9; box-sizing: border-box; color: #333; overflow: hidden; white-space: nowrap; padding-left: 1px; line-height: 13px; font-size: 11px; }
.chart { display: block; flex: none; }
.status { flex: 1; background: #2a3a58; display: flex; align-items: center; justify-content: flex-end; color: #d8deea; font-size: 11.5px; overflow: hidden; }
.zoomtxt { margin-right: 7px; }
.zoomdash { width: 5px; height: 1px; background: #d8deea; }

.t-axis { font-family: "Liberation Sans", sans-serif; font-size: 10px; letter-spacing: -.4px; fill: #555; }
.t-white { fill: #fff; }
.t-tip { font-family: "Liberation Sans", sans-serif; font-size: 9.5px; letter-spacing: -.4px; }
.t-band { font-family: "Liberation Sans", sans-serif; font-size: 10px; }
.t-purple { font-family: "Liberation Sans", sans-serif; font-size: 10.5px; fill: #8b3fa8; letter-spacing: -.3px; }
.t-dark { fill: #6a1f9a; font-size: 11px; }
.t-panel { font-family: "Liberation Sans", sans-serif; font-size: 10px; fill: #777; letter-spacing: -.3px; }
.t-pred { fill: #f88; }
.t-pblue { fill: #7f85fb; }
.t-ov { font-family: "Liberation Sans", sans-serif; font-size: 10px; letter-spacing: -.3px; }
</style>

<style>
html, body { margin: 0; padding: 0; background: #d5dcea; }
</style>
